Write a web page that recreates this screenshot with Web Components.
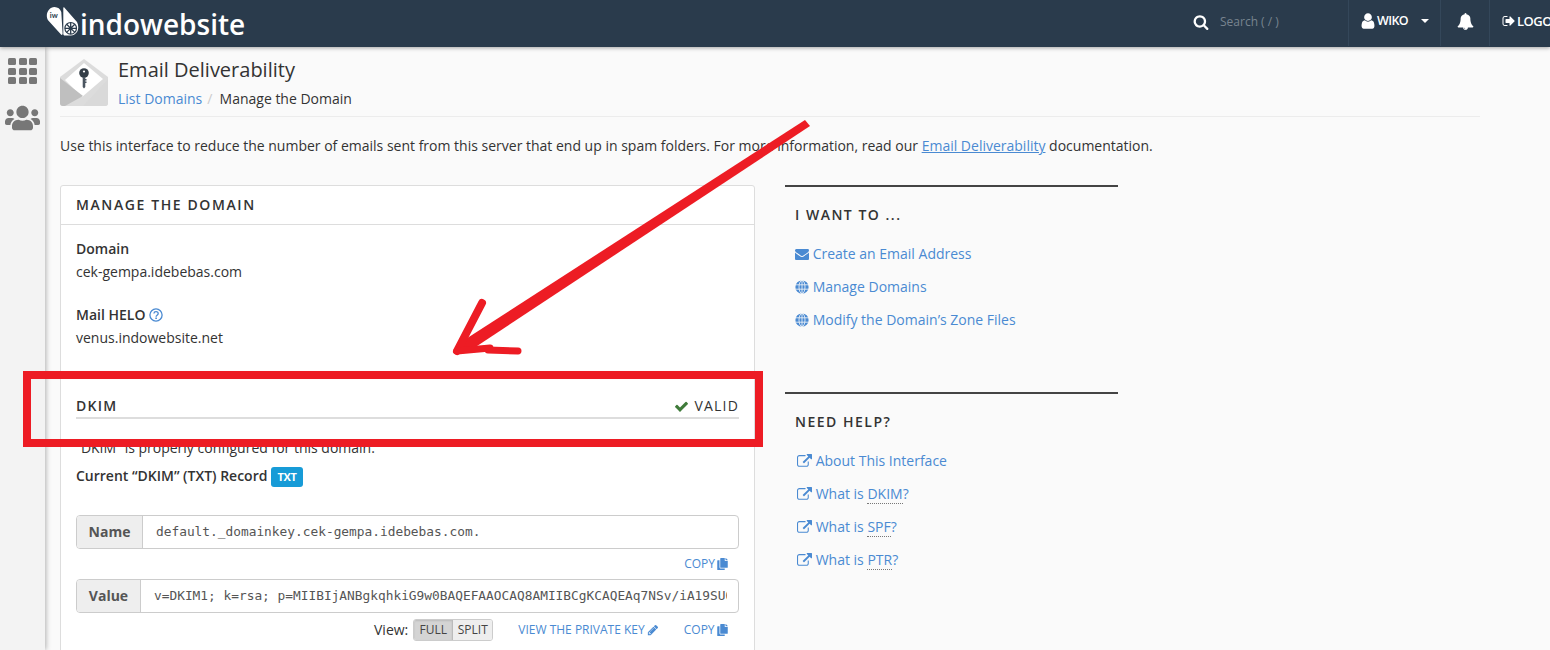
<!DOCTYPE html>
<html>
<head>
<meta charset="utf-8">
<title>Email Deliverability</title>
<style>
  html, body { margin: 0; height: 650px; overflow: hidden; }
  body { background: #fafafa; color: #333; font: 14px/20px "Open Sans", sans-serif; position: relative; }
  .page { display: flex; height: 603px; }
</style>
</head>
<body>
<x-topbar></x-topbar>
<div class="page">
  <x-sidebar></x-sidebar>
  <x-main>
    <x-head></x-head>
    <p slot="intro">Use this interface to reduce the number of emails sent from this server that end up in spam folders. For more information, read our <a href="#">Email Deliverability</a> documentation.</p>
    <x-card slot="card"></x-card>
    <x-aside slot="aside"></x-aside>
  </x-main>
</div>
<x-markup></x-markup>

<script>
const ICONS = {
  search: [1792, 1792, "M1216 832q0-185-131.500-316.500t-316.500-131.500-316.500 131.500-131.500 316.500 131.500 316.500 316.500 131.500 316.500-131.500 131.500-316.500zm512 832q0 52-38 90t-90 38q-54 0-90-38l-343-342q-179 124-399 124-143 0-273.500-55.500t-225-150-150-225-55.500-273.500 55.500-273.500 150-225 225-150 273.500-55.500 273.500 55.500 225 150 150 225 55.500 273.500q0 220-124 399l343 343q37 37 37 90z"],
  user: [1792, 1792, "M1536 1399q0 109-62.500 187t-150.500 78h-854q-88 0-150.500-78t-62.500-187q0-85 8.500-160.500t31.500-152 58.500-131 94-89 134.500-34.500q131 128 313 128t313-128q76 0 134.500 34.500t94 89 58.500 131 31.500 152 8.500 160.500zm-256-887q0 159-112.500 271.500t-271.500 112.500-271.500-112.500-112.500-271.500 112.500-271.500 271.500-112.500 271.500 112.500 112.500 271.500z"],
  bell: [1792, 1792, "M912 1696q0-16-16-16-59 0-101.500-42.500t-42.500-101.500q0-16-16-16t-16 16q0 73 51.500 124.500t124.500 51.500q16 0 16-16zm816-288q0 52-38 90t-90 38h-448q0 106-75 181t-181 75-181-75-75-181h-448q-52 0-90-38t-38-90q50-42 91-88t85-119.500 74.500-158.500 50-206 19.500-260q0-152 117-282.500t307-158.500q-8-19-8-39 0-40 28-68t68-28 68 28 28 68q0 20-8 39 190 28 307 158.500t117 282.500q0 139 19.500 260t50 206 74.500 158.500 85 119.500 91 88z"],
  check: [1792, 1792, "M1671 566q0 40-28 68l-724 724-136 136q-28 28-68 28t-68-28l-136-136-362-362q-28-28-28-68t28-68l136-136q28-28 68-28t68 28l294 295 656-657q28-28 68-28t68 28l136 136q28 28 28 68z"],
  signout: [1792, 1792, "M704 1440q0 4 1 20t.5 26.500-3 23.500-10 19.500-20.500 6.500h-320q-119 0-203.500-84.500t-84.500-203.500v-704q0-119 84.500-203.500t203.500-84.500h320q13 0 22.500 9.500t9.500 22.500q0 4 1 20t.5 26.500-3 23.500-10 19.500-20.500 6.500h-320q-66 0-113 47t-47 113v704q0 66 47 113t113 47h312l11.500 1 11.500 3 8 5.500 7 9 2 13.500zm928-544q0 26-19 45l-544 544q-19 19-45 19t-45-19-19-45v-288h-448q-26 0-45-19t-19-45v-384q0-26 19-45t45-19h448v-288q0-26 19-45t45-19 45 19l544 544q19 19 19 45z"],
  envelope: [1792, 1792, "M1792 710v794q0 66-47 113t-113 47h-1472q-66 0-113-47t-47-113v-794q44 49 101 87 362 246 497 345 57 42 92.500 65.500t94.500 48 110 24.500h2q51 0 110-24.500t94.500-48 92.500-65.500q170-123 498-345 57-39 100-87zm0-294q0 79-49 151t-122 123q-376 261-468 325-10 7-42.500 30.500t-54 38-52 32.500-57.500 27-50 9h-2q-23 0-50-9t-57.500-27-52-32.500-54-38-42.500-30.500q-91-64-262-182.500t-205-142.500q-62-42-117-115.500t-55-136.500q0-78 41.500-130t118.500-52h1472q65 0 112.500 47t47.500 113z"],
  external: [1792, 1792, "M1408 928v320q0 119-84.500 203.500t-203.500 84.500h-832q-119 0-203.500-84.500t-84.500-203.500v-832q0-119 84.500-203.500t203.500-84.500h704q14 0 23 9t9 23v64q0 14-9 23t-23 9h-704q-66 0-113 47t-47 113v832q0 66 47 113t113 47h832q66 0 113-47t47-113v-320q0-14 9-23t23-9h64q14 0 23 9t9 23zm384-864v512q0 26-19 45t-45 19-45-19l-176-176-652 652q-10 10-23 10t-23-10l-114-114q-10-10-10-23t10-23l652-652-176-176q-19-19-19-45t19-45 45-19h512q26 0 45 19t19 45z"],
  pencil: [1792, 1792, "M491 1536l91-91-235-235-91 91v107h128v128h107zm523-928q0-22-22-22-10 0-17 7l-542 542q-7 7-7 17 0 22 22 22 10 0 17-7l542-542q7-7 7-17zm-54-192l416 416-832 832h-416v-416zm683 96q0 53-37 90l-166 166-416-416 166-165q36-38 90-38 53 0 91 38l235 234q37 39 37 91z"],
  users: [640, 512, "M96 224c35.300 0 64-28.700 64-64s-28.700-64-64-64-64 28.700-64 64 28.700 64 64 64zm448 0c35.300 0 64-28.700 64-64s-28.700-64-64-64-64 28.700-64 64 28.700 64 64 64zm32 32h-64c-17.600 0-33.500 7.100-45.100 18.600 40.300 22.100 68.900 62 75.100 109.400h66c17.700 0 32-14.300 32-32v-32c0-35.300-28.700-64-64-64zm-256 0c61.900 0 112-50.100 112-112S381.900 32 320 32 208 82.100 208 144s50.100 112 112 112zm76.800 32h-8.300c-20.800 10-43.900 16-68.500 16s-47.600-6-68.500-16h-8.300C179.600 288 128 339.600 128 403.200V432c0 26.500 21.500 48 48 48h288c26.500 0 48-21.500 48-48v-28.800c0-63.600-51.600-115.200-115.200-115.200zm-223.700-13.400C161.500 263.100 145.600 256 128 256H64c-35.300 0-64 28.700-64 64v32c0 17.700 14.300 32 32 32h65.900c6.300-47.400 34.900-87.300 75.200-109.400z"],
  copy: [448, 512, "M320 448v40c0 13.255-10.745 24-24 24H24c-13.255 0-24-10.745-24-24V120c0-13.255 10.745-24 24-24h72v296c0 30.879 25.121 56 56 56h168zm0-344V0H152c-13.255 0-24 10.745-24 24v368c0 13.255 10.745 24 24 24h272c13.255 0 24-10.745 24-24V128H344c-13.200 0-24-10.800-24-24zm120.971-31.029L375.029 7.029A24 24 0 0 0 358.059 0H352v96h96v-6.059a24 24 0 0 0-7.029-16.970z"]
};

class XIcon extends HTMLElement {
  constructor() {
    super();
    const size = this.getAttribute("size") || 14;
    const name = this.getAttribute("name");
    this.attachShadow({ mode: "open" });
    let svg;
    if (name == "globe") {
      svg = `<svg viewBox="0 0 14 14" width="${size}" height="${size}">
        <circle cx="7" cy="7" r="6.600" fill="currentColor"/>
        <g fill="none" stroke="#fafafa" stroke-width=".8">
          <ellipse cx="7" cy="7" rx="3" ry="6.600"/><path d="M7 .4v13.200M.8 4.800h12.400M.8 9.200h12.400"/>
        </g></svg>`;
    } else if (name == "help") {
      svg = `<svg viewBox="0 0 14 14" width="${size}" height="${size}">
        <circle cx="7" cy="7" r="6.100" fill="none" stroke="currentColor" stroke-width="1.300"/>
        <path d="M4.900 5.500C5 4.200 6 3.700 7 3.700c1.300 0 2.200.8 2.200 1.900 0 1.700-2.100 1.600-2.100 3.100" fill="none" stroke="currentColor" stroke-width="1.300"/>
        <rect x="6.300" y="9.500" width="1.600" height="1.500" fill="currentColor"/></svg>`;
    } else {
      const [vw, vh, d] = ICONS[name];
      const width = Math.round(size * vw / vh);
      svg = `<svg viewBox="0 0 ${vw} ${vh}" width="${width}" height="${size}"><path fill="currentColor" d="${d}"/></svg>`;
    }
    this.shadowRoot.innerHTML = `<style>:host{display:inline-flex;align-items:center;vertical-align:middle}svg{display:block}</style>${svg}`;
  }
}
customElements.define("x-icon", XIcon);

class XTopbar extends HTMLElement {
  constructor() {
    super();
    this.attachShadow({ mode: "open" });
    this.shadowRoot.innerHTML = `
    <style>
      :host { display: flex; position: relative; z-index: 2; height: 47px; background: #2a3b4c; color: #fff; box-shadow: 0 1px 4px rgba(0,0,0,.35); overflow: hidden; font-size: 13px; }
      .logo { display: flex; align-items: flex-start; margin-left: 46px; width: 1130px; flex: none; }
      .logo svg { display: block; margin-top: 7px; flex: none; }
      .word { font: 600 28px/34px "Open Sans", sans-serif; margin: 7px 0 0 1px; letter-spacing: 0; }
      .search { display: flex; align-items: center; width: 172px; flex: none; padding: 0 0 4px 17px; box-sizing: border-box; font-size: 12px; }
      .search span { margin-left: 11px; color: #78848f; }
      .cell { display: flex; align-items: center; flex: none; height: 46px; padding-bottom: 4px; border-left: 1px solid #34475a; box-sizing: border-box; }
      .user { width: 92px; padding-left: 10px; font-weight: 600; font-size: 12.500px; letter-spacing: -.6px; }
      .caret { width: 0; height: 0; margin-left: 13px; border: 4px solid transparent; border-top-color: #fff; border-bottom: 0; }
      .bell { width: 49px; padding-left: 16px; }
      .out { width: 80px; padding-left: 12px; font-weight: 600; letter-spacing: -.5px; }
      .out span { margin-left: 1px; }
    </style>
    <div class="logo">
      <svg width="33" height="30" viewBox="0 0 33 30">
        <path d="M8.500 0a7.500 7.500 0 0 1 6.800 5L16.600 26.500c0 1.500-1 1.800-1.800.8L2.300 13.500C-1.500 8 2.500 0 8.500 0z" fill="#fff"/>
        <text x="3.800" y="10.500" font-family="Lato, sans-serif" font-size="7.500" font-weight="700" fill="#2a3b4c">iw</text>
        <path d="M17.300 .8c0-.6.700-.8 1-.3L31 15c3 6 .5 13-6 13.400h-6.200c-1 0-1.500-.6-1.500-1.500z" fill="#fff"/>
        <circle cx="24.700" cy="21.300" r="5.800" fill="none" stroke="#2a3b4c" stroke-width="1.200"/>
        <path d="M24.700 15.500v11.600M18.900 21.300h11.600M20.600 17.200l8.200 8.200M28.800 17.200l-8.200 8.200" stroke="#2a3b4c" stroke-width="1.300"/>
      </svg>
      <div class="word">indowebsite</div>
    </div>
    <div class="search"><x-icon name="search" size="16"></x-icon><span>Search ( / )</span></div>
    <div class="cell user"><x-icon name="user" size="18"></x-icon><span>WIKO</span><i class="caret"></i></div>
    <div class="cell bell"><x-icon name="bell" size="17"></x-icon></div>
    <div class="cell out"><x-icon name="signout" size="14"></x-icon><span>LOGOUT</span></div>`;
  }
}
customElements.define("x-topbar", XTopbar);

class XSidebar extends HTMLElement {
  constructor() {
    super();
    this.attachShadow({ mode: "open" });
    let cells = "";
    for (let i = 0; i < 9; i++) cells += "<i></i>";
    this.shadowRoot.innerHTML = `
    <style>
      :host { display: block; width: 45px; flex: none; box-sizing: border-box; background: #f3f3f3; box-shadow: 1px 0 5px rgba(0,0,0,.3); color: #777; position: relative; z-index: 1; }
      .grid { display: grid; grid-template-columns: repeat(3, 8px); grid-auto-rows: 7px; gap: 2.500px; margin: 11px 0 0 8px; }
      .grid i { background: #777; border-radius: 1.500px; }
      .users { display: block; margin: 20px 0 0 5px; }
    </style>
    <div class="grid">${cells}</div>
    <x-icon class="users" name="users" size="28"></x-icon>`;
  }
}
customElements.define("x-sidebar", XSidebar);

class XMain extends HTMLElement {
  constructor() {
    super();
    this.attachShadow({ mode: "open" });
    this.shadowRoot.innerHTML = `
    <style>
      :host { display: block; flex: 1; padding: 12px 70px 0 15px; overflow: hidden; }
      .columns { display: flex; gap: 30px; align-items: flex-start; margin-top: 29px; }
      ::slotted(p) { margin: 0; padding-top: 19px; height: 20px; }
      ::slotted(x-card) { width: 695px; flex: none; }
      ::slotted(x-aside) { width: 333px; flex: none; }
    </style>
    <slot></slot>
    <slot name="intro"></slot>
    <div class="columns"><slot name="card"></slot><slot name="aside"></slot></div>`;
  }
  connectedCallback() {
    const a = this.querySelector("p a");
    if (a) { a.style.color = "#4a8ad2"; a.style.textDecoration = "underline"; }
  }
}

class XHead extends HTMLElement {
  constructor() {
    super();
    this.attachShadow({ mode: "open" });
    this.shadowRoot.innerHTML = `
    <style>
      :host { display: flex; height: 57px; border-bottom: 1px solid #ececec; }
      svg { display: block; flex: none; }
      .text { margin-left: 10px; }
      h1 { font: 400 20px/24px "Open Sans", sans-serif; margin: -1px 0 0; color: #333; }
      .crumb { margin-top: 7px; line-height: 20px; }
      a { color: #4a8ad2; text-decoration: none; }
      .sep { color: #ccc; padding: 0 3.500px 0 5px; }
    </style>
    <svg width="48" height="47" viewBox="0 0 48 47">
      <path d="M24 0 48 18v26a3 3 0 0 1-3 3H3a3 3 0 0 1-3-3V18z" fill="#dcdcdc"/>
      <path d="M5 21 24 4l19 16-21 18z" fill="#fff"/>
      <path d="M0 19v25a3 3 0 0 0 3 3h2l18-10z" fill="#bfbfbf"/>
      <path d="M23 47 48 20v24a3 3 0 0 1-3 3z" fill="#d9d9d9"/>
      <circle cx="24" cy="14" r="4.800" fill="#333d47"/>
      <circle cx="24" cy="12.500" r="1.100" fill="#fff"/>
      <path d="M22.700 18h2.600v2h1.200v1.500h-1.200v1h1.200V24h-1.200v4l-1.300 1.600-1.300-1.600z" fill="#4a5560"/>
    </svg>
    <div class="text">
      <h1>Email Deliverability</h1>
      <div class="crumb"><a href="#">List Domains</a><span class="sep">/</span> Manage the Domain</div>
    </div>`;
  }
}
customElements.define("x-head", XHead);

class XField extends HTMLElement {
  constructor() {
    super();
    this.attachShadow({ mode: "open" });
    const w = this.getAttribute("addon-width");
    this.shadowRoot.innerHTML = `
    <style>
      :host { display: flex; height: 34px; box-sizing: border-box; border: 1px solid #ccc; border-radius: 4px; background: #fff; }
      .addon { width: ${w}px; flex: none; box-sizing: border-box; display: flex; align-items: center; justify-content: center; background: #eee; border-right: 1px solid #ccc; border-radius: 3px 0 0 3px; color: #555; font-weight: 700; }
      .val { flex: 1; min-width: 0; margin: 0 11px 0 13px; overflow: hidden; white-space: nowrap; color: #555; font: 12.830px/32px "DejaVu Sans Mono", monospace; }
    </style>
    <div class="addon"><slot name="label"></slot></div>
    <div class="val"><slot></slot></div>`;
  }
}
customElements.define("x-field", XField);

class XCopy extends HTMLElement {
  constructor() {
    super();
    this.attachShadow({ mode: "open" });
    this.shadowRoot.innerHTML = `
    <style>
      :host { display: inline-flex; align-items: center; color: #4a8ad2; font-size: 12px; line-height: 20px; white-space: nowrap; }
      x-icon { margin-left: 2px; }
    </style>
    <slot></slot><x-icon name="${this.getAttribute("icon")}" size="12"></x-icon>`;
  }
}
customElements.define("x-copy", XCopy);

class XCard extends HTMLElement {
  constructor() {
    super();
    this.attachShadow({ mode: "open" });
    this.shadowRoot.innerHTML = `
    <style>
      :host { display: block; box-sizing: border-box; background: #fff; border: 1px solid #ddd; border-radius: 3px; height: 520px; }
      .title { height: 38px; border-bottom: 1px solid #ddd; padding-left: 15px; font-weight: 600; letter-spacing: 1.600px; line-height: 37px; color: #333; }
      .body { padding: 14px 15px 0; }
      .lbl { font-weight: 600; height: 20px; }
      .v { margin-top: 3px; height: 20px; }
      .help { color: #4a8ad2; position: relative; top: -1px; }
      .sec { display: flex; justify-content: space-between; margin-top: 48px; height: 20px; padding-bottom: 1px; border-bottom: 2px solid #ddd; font-weight: 600; letter-spacing: 1.300px; }
      .ok { font-weight: 400; letter-spacing: 1.200px; }
      .ok x-icon { color: #3f7b3a; margin-right: 1px; position: relative; top: -1px; }
      .status { margin-top: 19px; height: 20px; }
      .rec { margin-top: 8px; height: 20px; font-weight: 600; }
      .badge { display: inline-block; width: 32px; height: 20px; background: #179bd7; border-radius: 3px; color: #fff; font-size: 11px; line-height: 20px; text-align: center; font-weight: 700; letter-spacing: -.3px; }
      x-field { margin-top: 29px; }
      .copy { display: flex; justify-content: flex-end; align-items: center; height: 30px; padding-right: 11px; }
      .copy + x-field { margin-top: 0; }
      .view { display: flex; align-items: center; height: 34px; padding-left: 298px; }
      .btns { display: flex; margin-left: 5px; height: 22px; border: 1px solid #ccc; border-radius: 3px; box-sizing: border-box; font-size: 12px; line-height: 20px; color: #444; width: 80px; overflow: hidden; }
      .btns span { text-align: center; }
      .full { width: 38px; background: #d4d4d4; box-shadow: inset 0 1px 2px rgba(0,0,0,.12); border-right: 1px solid #bbb; }
      .split { flex: 1; background: #eee; }
      .pk { margin-left: 25px; }
      .c2 { margin-left: 25px; }
    </style>
    <div class="title">MANAGE THE DOMAIN</div>
    <div class="body">
      <div class="lbl">Domain</div>
      <div class="v">cek-gempa.idebebas.com</div>
      <div class="lbl" style="margin-top:23px">Mail HELO <x-icon class="help" name="help" size="14"></x-icon></div>
      <div class="v">venus.indowebsite.net</div>
      <div class="sec"><span>DKIM</span><span class="ok"><x-icon name="check" size="15"></x-icon> VALID</span></div>
      <div class="status">“DKIM” is properly configured for this domain.</div>
      <div class="rec">Current “DKIM” (TXT) Record <span class="badge">TXT</span></div>
      <x-field addon-width="66"><span slot="label">Name</span>default._domainkey.cek-gempa.idebebas.com.</x-field>
      <div class="copy"><x-copy icon="copy">COPY</x-copy></div>
      <x-field addon-width="64"><span slot="label">Value</span>v=DKIM1; k=rsa; p=MIIBIjANBgkqhkiG9w0BAQEFAAOCAQ8AMIIBCgKCAQEAq7NSv/iA19SUO</x-field>
      <div class="view">
        <span>View:</span>
        <div class="btns"><span class="full">FULL</span><span class="split">SPLIT</span></div>
        <x-copy class="pk" icon="pencil">VIEW THE PRIVATE KEY</x-copy>
        <x-copy class="c2" icon="copy">COPY</x-copy>
      </div>
    </div>`;
  }
}
customElements.define("x-card", XCard);

class XLinks extends HTMLElement {
  constructor() {
    super();
    this.attachShadow({ mode: "open" });
    this.shadowRoot.innerHTML = `
    <style>
      :host { display: block; box-sizing: border-box; border-top: 2px solid #444; padding: 18px 0 0 10px; }
      h4 { margin: 0 0 19px; font: 600 14px/20px "Open Sans", sans-serif; letter-spacing: 1.500px; color: #333; }
      ::slotted(div) { height: 20px; margin-bottom: 13px; color: #4a8ad2; white-space: nowrap; }
    </style>
    <h4>${this.getAttribute("heading")}</h4>
    <slot></slot>`;
  }
}
customElements.define("x-links", XLinks);

class XAside extends HTMLElement {
  constructor() {
    super();
    this.attachShadow({ mode: "open" });
    this.shadowRoot.innerHTML = `
    <style>
      :host { display: block; }
      x-links { height: 207px; }
      x-icon { position: relative; top: -1px; }
      .ext { margin: 0 .5px 0 1.500px; }
      abbr { text-decoration: none; border-bottom: 1px dotted #777; }
    </style>
    <x-links heading="I WANT TO ...">
      <div><x-icon name="envelope" size="14"></x-icon> Create an Email Address</div>
      <div><x-icon name="globe" size="14"></x-icon> Manage Domains</div>
      <div><x-icon name="globe" size="14"></x-icon> Modify the Domain’s Zone Files</div>
    </x-links>
    <x-links heading="NEED HELP?">
      <div><x-icon class="ext" name="external" size="15"></x-icon> About This Interface</div>
      <div><x-icon class="ext" name="external" size="15"></x-icon> What is <abbr>DKIM</abbr>?</div>
      <div><x-icon class="ext" name="external" size="15"></x-icon> What is <abbr>SPF</abbr>?</div>
      <div><x-icon class="ext" name="external" size="15"></x-icon> What is <abbr>PTR</abbr>?</div>
    </x-links>`;
  }
}
customElements.define("x-aside", XAside);
customElements.define("x-main", XMain);

// hand drawn red markup lying over the page
class XMarkup extends HTMLElement {
  constructor() {
    super();
    this.attachShadow({ mode: "open" });
    this.shadowRoot.innerHTML = `
    <style>
      :host { position: absolute; left: 0; top: 0; width: 1550px; height: 650px; pointer-events: none; z-index: 5; }
      svg { display: block; }
    </style>
    <svg width="1550" height="650" viewBox="0 0 1550 650">
      <rect x="27" y="375" width="732" height="68" fill="none" stroke="#ed1c24" stroke-width="8"/>
      <path d="M805 120 810 126 468 352 458 344z" fill="#ed1c24"/>
      <g fill="none" stroke="#ed1c24" stroke-linecap="round" stroke-linejoin="round">
        <path d="M482 303 457 351" stroke-width="8"/>
        <path d="M457 351 490 348" stroke-width="7"/>
        <path d="M488 350 518 351" stroke-width="7"/>
      </g>
    </svg>`;
  }
}
customElements.define("x-markup", XMarkup);
</script>
</body>
</html>
